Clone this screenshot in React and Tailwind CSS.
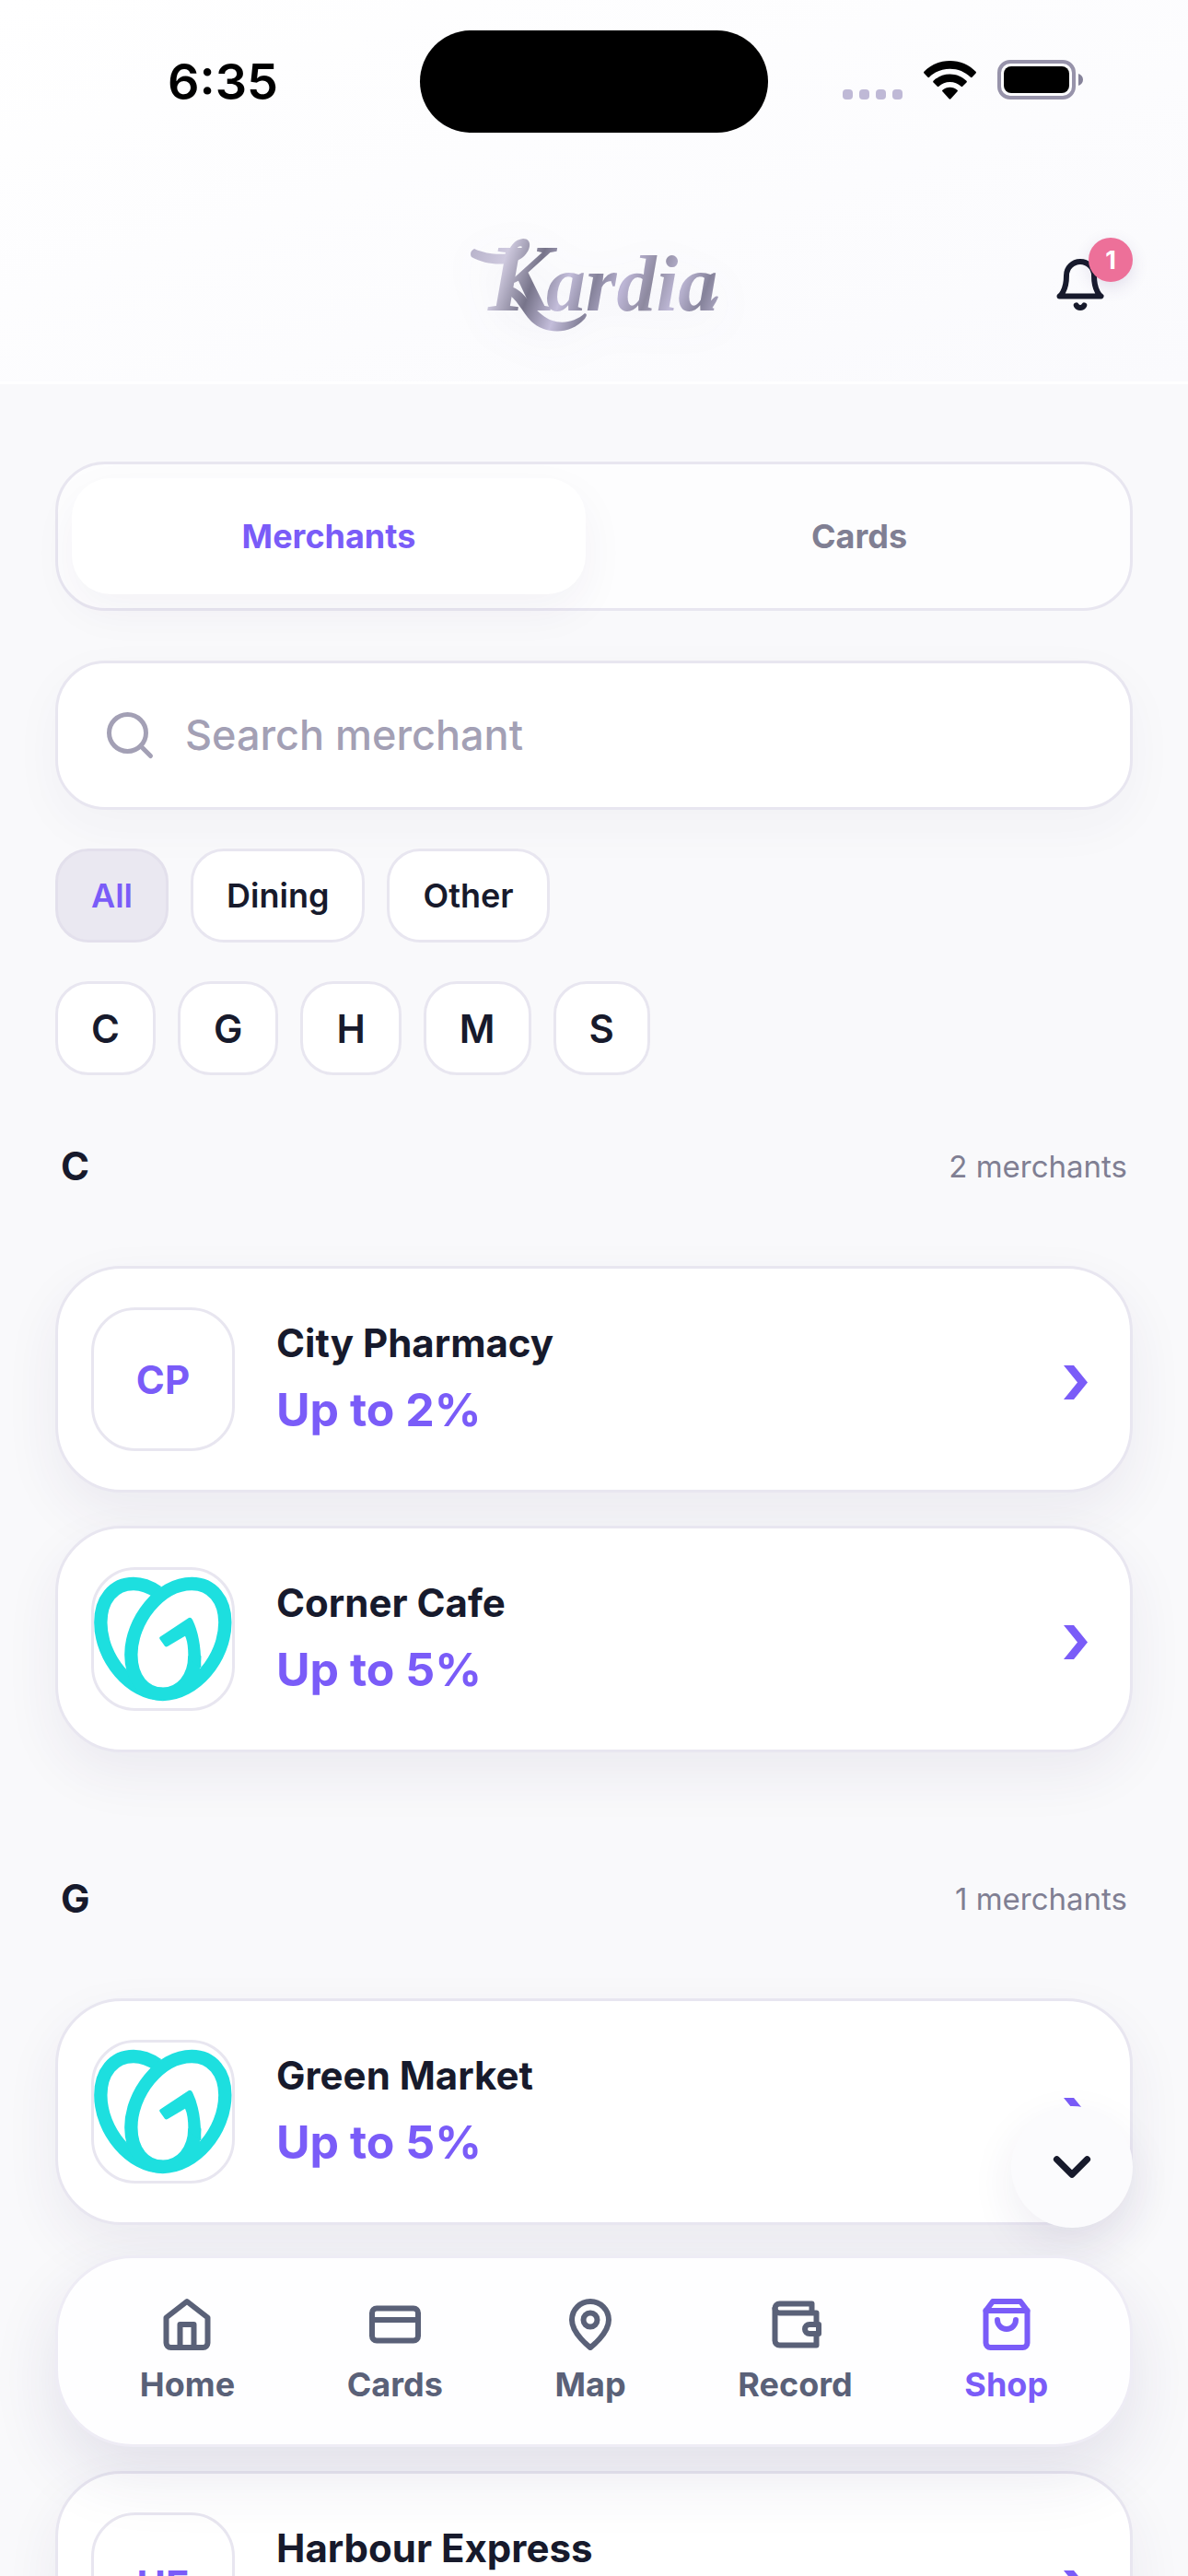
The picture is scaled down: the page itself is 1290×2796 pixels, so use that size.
import React, { useMemo, useState } from 'react';

const FILTERS = ['All', 'Dining', 'Other'];
const TABS = ['Merchants', 'Cards'];

const MERCHANTS = [
  { name: 'City Pharmacy', offer: 'Up to 2%', initials: 'CP', category: 'Other' },
  { name: 'Corner Cafe', offer: 'Up to 5%', logo: true, category: 'Dining' },
  { name: 'Green Market', offer: 'Up to 5%', logo: true, category: 'Other' },
  { name: 'Harbour Express', offer: 'Up to 3%', initials: 'HE', category: 'Other' },
];

const LETTERS = ['C', 'G', 'H', 'M', 'S'];

const NAV_ITEMS = [
  {
    label: 'Home',
    paths: ['m3 9 9-7 9 7v11a2 2 0 0 1-2 2H5a2 2 0 0 1-2-2z', 'M9 22V12h6v10'],
  },
  {
    label: 'Cards',
    paths: ['M4 5h16a2 2 0 0 1 2 2v10a2 2 0 0 1-2 2H4a2 2 0 0 1-2-2V7a2 2 0 0 1 2-2z', 'M2 10h20'],
  },
  {
    label: 'Map',
    paths: ['M20 10c0 6-8 12-8 12s-8-6-8-12a8 8 0 0 1 16 0Z', 'M15 10a3 3 0 1 1-6 0 3 3 0 0 1 6 0z'],
  },
  {
    label: 'Record',
    paths: ['M21 12V7H5a2 2 0 0 1 0-4h14v4', 'M3 5v14a2 2 0 0 0 2 2h16v-5', 'M18 12a2 2 0 0 0 0 4h4v-4Z'],
  },
  {
    label: 'Shop',
    paths: ['M6 2 3 6v14a2 2 0 0 0 2 2h14a2 2 0 0 0 2-2V6l-3-4Z', 'M3 6h18', 'M16 10a4 4 0 0 1-8 0'],
  },
];

function LineIcon({ paths, className, strokeWidth = 2.4 }) {
  return (
    <svg
      viewBox="0 0 24 24"
      fill="none"
      stroke="currentColor"
      strokeWidth={strokeWidth}
      strokeLinecap="round"
      strokeLinejoin="round"
      className={className}
      aria-hidden="true"
    >
      {paths.map((d) => (
        <path key={d} d={d} />
      ))}
    </svg>
  );
}

function StatusBar() {
  return (
    <div className="grid grid-cols-[1fr_378px_1fr] items-center px-7 pt-[33px]">
      <span className="text-center text-[54px] leading-[60px] font-semibold text-black">6:35</span>
      <div className="h-[111px] rounded-full bg-black" />
      <div className="flex items-end justify-center gap-[23px] pr-1.5 pb-1">
        <div className="flex gap-[7px]">
          {[0, 1, 2, 3].map((i) => (
            <span key={i} className="size-[11px] rounded-[4px] bg-[#bfb9d6]" />
          ))}
        </div>
        <svg viewBox="0 0 57 42" className="h-[42px] w-[57px]" aria-hidden="true">
          <path d="M28.500 0C39.500 0 49.500 4.400 56.600 11.800a1.200 1.200 0 0 1 0 1.600L52.600 17.700a1.200 1.200 0 0 1-1.700 0C45 12 37.200 8.700 28.500 8.700S12 12 6.100 17.700a1.200 1.200 0 0 1-1.700 0L.4 13.400a1.200 1.200 0 0 1 0-1.600C7.500 4.400 17.500 0 28.500 0z" />
          <path d="M28.500 14.500c7 0 13.300 2.800 18 7.300.5.500.5 1.100 0 1.600l-4.300 4.400c-.5.500-1.100.5-1.600 0-3.300-3-7.500-4.800-12.100-4.800s-8.800 1.800-12.100 4.800c-.5.500-1.100.5-1.600 0l-4.300-4.400c-.5-.5-.5-1.100 0-1.600 4.700-4.500 11-7.300 18-7.300z" />
          <path d="M28.500 28.800c3 0 5.800 1.100 8 2.900.6.500.6 1.100.1 1.600l-7.200 8c-.5.600-1.300.6-1.800 0l-7.200-8c-.5-.5-.5-1.100.1-1.600 2.200-1.800 5-2.900 8-2.900z" />
        </svg>
        <svg viewBox="0 0 93 43" className="h-[43px] w-[93px]" aria-hidden="true">
          <rect x="2" y="2" width="81" height="39" rx="12" fill="none" stroke="#9793aa" strokeWidth="4" />
          <rect x="7" y="7" width="71" height="29" rx="8" />
          <path d="M88 15c3 1 5 3.500 5 6.500s-2 5.500-5 6.500z" fill="#86839a" />
        </svg>
      </div>
    </div>
  );
}

function Wordmark() {
  return (
    <svg viewBox="0 0 270 101" className="h-[101px] w-[270px] overflow-visible drop-shadow-[0_12px_24px_rgba(80,70,130,0.05)]" role="img" aria-label="Kardia">
      <defs>
        <linearGradient id="metal" x1="0" y1="0" x2="270" y2="101" gradientUnits="userSpaceOnUse">
          <stop offset="0" stopColor="#b5b0c8" />
          <stop offset="0.150" stopColor="#cfcadf" />
          <stop offset="0.280" stopColor="#77748a" />
          <stop offset="0.400" stopColor="#c4bedb" />
          <stop offset="0.500" stopColor="#85829a" />
          <stop offset="0.600" stopColor="#bdb6d6" />
          <stop offset="0.700" stopColor="#8d899f" />
          <stop offset="0.800" stopColor="#c0bad8" />
          <stop offset="0.900" stopColor="#85829a" />
          <stop offset="1" stopColor="#bfb9d6" />
        </linearGradient>
      </defs>
      <g fill="url(#metal)" fontFamily="'Liberation Serif', serif" fontStyle="italic" fontWeight="700">
        <text x="20" y="78" fontSize="104">K</text>
        <text x="83" y="78" fontSize="86">ardia</text>
      </g>
      {/* ribbon flourishes around the initial */}
      <path d="M5 11C1 13 0 17 2 20C20 30 46 30 58 20C67 12 68 0 58 0C49 1 43 8 40 20L47 20C49 11 54 6 57 9C52 18 24 20 5 11Z" fill="url(#metal)" />
      <path d="M40 51C60 54 64 72 79 83C92 94 112 93 125 81C128 82 127 84 125 87C108 106 81 103 67 90C57 80 52 65 38 58Z" fill="url(#metal)" />
      <path d="M263 76C267 70 269 66 270 63C266 60 262 70 256 72Z" fill="url(#metal)" />
    </svg>
  );
}

function PetalLogo() {
  return (
    <svg viewBox="36 42 450 450" className="size-full" fill="none" stroke="#1ddfdf" strokeWidth="43" aria-hidden="true">
      <path d="M243 114C217 96 190 87 165 87C99 87 58 140 58 213C58 330 156 447 260 447" />
      <path d="M260 447C364 447 463 330 463 213C463 140 421 87 355 87C250 87 157 208 157 318C157 395 200 446 260 446C320 446 364 395 364 322" />
      <path
        d="M251 260L345 198Q352 195 357 204Q386 262 385 362L343 330Q344 280 333 257L276 291Q271 294 267 290L251 268Q248 263 251 260Z"
        fill="#1ddfdf"
        stroke="none"
      />
    </svg>
  );
}

function Header() {
  return (
    <header className="border-b-[3px] border-white bg-linear-to-br from-white to-[#fafafd]">
      <StatusBar />
      <div className="mt-[60px] grid h-[210px] grid-cols-[1fr_auto_1fr] items-center px-[60px]">
        <div />
        <Wordmark />
        <button type="button" aria-label="Notifications" className="relative mr-[27px] justify-self-end text-[#171a2c]">
          <LineIcon
            className="size-[60px]"
            paths={['M6 8a6 6 0 0 1 12 0c0 7 3 9 3 9H3s3-2 3-9', 'M10.300 21a1.940 1.940 0 0 0 3.400 0']}
          />
          <span className="absolute -top-[21px] -right-[27px] flex size-12 items-center justify-center rounded-full bg-[#ed7099] text-[27px] leading-none font-bold text-white shadow-[0_6px_18px_rgba(80,60,130,0.14)]">
            1
          </span>
        </button>
      </div>
    </header>
  );
}

function MerchantCard({ merchant }) {
  return (
    <button
      type="button"
      className="flex w-full items-center rounded-[72px] border-[3px] border-[#e8e6f0] bg-white px-9 py-[42px] text-left shadow-[0_24px_60px_rgba(50,40,100,0.07)]"
    >
      <span className="flex size-[156px] shrink-0 items-center justify-center overflow-hidden rounded-[48px] border-[3px] border-[#e8e6f0] bg-white text-[42px] font-bold text-[#7a5cf8]">
        {merchant.logo ? <PetalLogo /> : merchant.initials}
      </span>
      <span className="ml-[45px] flex flex-1 flex-col gap-3">
        <span className="text-[42px] leading-[54px] font-bold text-[#171a2c]">{merchant.name}</span>
        <span className="text-[50px] leading-[66px] font-bold text-[#7a5cf8]">{merchant.offer}</span>
      </span>
      <svg viewBox="0 0 36 48" className="h-12 w-9 shrink-0" aria-hidden="true">
        <path d="M0 9H11L26 27.500L11 46H0L15 27.500Z" fill="#7a5cf8" />
      </svg>
    </button>
  );
}

function MerchantSection({ letter, merchants, headingHidden }) {
  return (
    <section className="pt-[72px] pb-[60px]">
      <div className="mb-[81px] flex h-[54px] items-center justify-between px-1.5 leading-[54px]">
        {!headingHidden && (
          <>
            <h2 className="text-[42px] font-bold text-[#171a2c]">{letter}</h2>
            <span className="text-[33px] text-[#807f93]">{merchants.length} merchants</span>
          </>
        )}
      </div>
      <div className="flex flex-col gap-9">
        {merchants.map((m) => (
          <MerchantCard key={m.name} merchant={m} />
        ))}
      </div>
    </section>
  );
}

function BottomNav({ active, onChange }) {
  return (
    <nav className="absolute inset-x-[60px] bottom-[140px] flex justify-around rounded-[84px] border-[3px] border-[#eeecf5] bg-[#fefeff] px-7 py-[42px] shadow-[0_30px_72px_rgba(50,40,100,0.11)]">
      {NAV_ITEMS.map((item) => (
        <button
          key={item.label}
          type="button"
          onClick={() => onChange(item.label)}
          className={`flex flex-col items-center gap-3 ${active === item.label ? 'text-[#7a5cf8]' : 'text-[#5a6178]'}`}
        >
          <LineIcon paths={item.paths} className="size-[60px]" />
          <span className="text-[36px] leading-[46px] font-bold">{item.label}</span>
        </button>
      ))}
    </nav>
  );
}

export default function App() {
  const [tab, setTab] = useState('Merchants');
  const [query, setQuery] = useState('');
  const [filter, setFilter] = useState('All');
  const [page, setPage] = useState('Shop');

  // Group the visible merchants by their first letter
  const groups = useMemo(() => {
    const result = {};
    MERCHANTS.filter((m) => filter === 'All' || m.category === filter)
      .filter((m) => m.name.toLowerCase().includes(query.toLowerCase()))
      .forEach((m) => {
        const letter = m.name[0];
        if (!result[letter]) result[letter] = [];
        result[letter].push(m);
      });
    return result;
  }, [filter, query]);

  return (
    <div className="relative flex h-screen flex-col overflow-hidden bg-[#f9f9fb] font-['Inter',sans-serif]">
      <Header />

      <main className="min-h-0 flex-1 overflow-y-auto px-[60px] pt-[84px] [scrollbar-width:none]">
        {/* Tabs */}
        <div className="flex gap-[18px] rounded-[54px] border-[3px] border-[#e8e6f0] bg-[#fdfdfe] p-[15px]">
          {TABS.map((t) => (
            <button
              key={t}
              type="button"
              onClick={() => setTab(t)}
              className={`h-[126px] flex-1 rounded-[42px] text-[36px] font-bold ${
                tab === t ? 'bg-white text-[#7a5cf8] shadow-[0_18px_48px_rgba(50,40,100,0.05)]' : 'text-[#807f93]'
              }`}
            >
              {t}
            </button>
          ))}
        </div>

        {/* Search */}
        <label className="mt-[54px] flex h-[162px] items-center gap-[30px] rounded-[54px] border-[3px] border-[#e8e6f0] bg-white px-12 shadow-[0_18px_54px_rgba(50,40,100,0.04)]">
          <LineIcon
            className="size-[60px] shrink-0 text-[#a3a0b5]"
            strokeWidth={2}
            paths={['M19 11a8 8 0 1 1-16 0 8 8 0 0 1 16 0z', 'm21 21-4.300-4.300']}
          />
          <input
            type="text"
            value={query}
            onChange={(e) => setQuery(e.target.value)}
            placeholder="Search merchant"
            aria-label="Search merchant"
            className="min-w-0 flex-1 text-[45px] font-medium text-[#171a2c] outline-none placeholder:text-[#a3a0b5]"
          />
        </label>

        {/* Category filters */}
        <div className="mt-[42px] flex gap-6">
          {FILTERS.map((f) => (
            <button
              key={f}
              type="button"
              onClick={() => setFilter(f)}
              className={`h-[102px] rounded-[36px] border-[3px] px-9 text-[36px] font-semibold ${
                filter === f ? 'border-[#e3e0ec] bg-[#eae8f1] text-[#7a5cf8]' : 'border-[#e8e6f0] bg-white text-[#171a2c]'
              }`}
            >
              {f}
            </button>
          ))}
        </div>

        {/* Letter index */}
        <div className="mt-[42px] flex gap-6">
          {LETTERS.map((l) => (
            <button
              key={l}
              type="button"
              className="h-[102px] rounded-[36px] border-[3px] border-[#e8e6f0] bg-white px-9 text-[42px] font-semibold text-[#171a2c]"
            >
              {l}
            </button>
          ))}
        </div>

        {Object.entries(groups).map(([letter, merchants], idx) => (
          <MerchantSection key={letter} letter={letter} merchants={merchants} headingHidden={idx === 2} />
        ))}
      </main>

      <button
        type="button"
        aria-label="Scroll down"
        className="absolute right-[60px] bottom-[378px] flex size-[132px] items-center justify-center rounded-full bg-[#fbfbfd] text-[#171a2c] shadow-[0_18px_48px_rgba(50,40,100,0.08)]"
      >
        <LineIcon paths={['m6 9 6 6 6-6']} strokeWidth={2.6} className="size-[66px]" />
      </button>

      <BottomNav active={page} onChange={setPage} />
    </div>
  );
}
